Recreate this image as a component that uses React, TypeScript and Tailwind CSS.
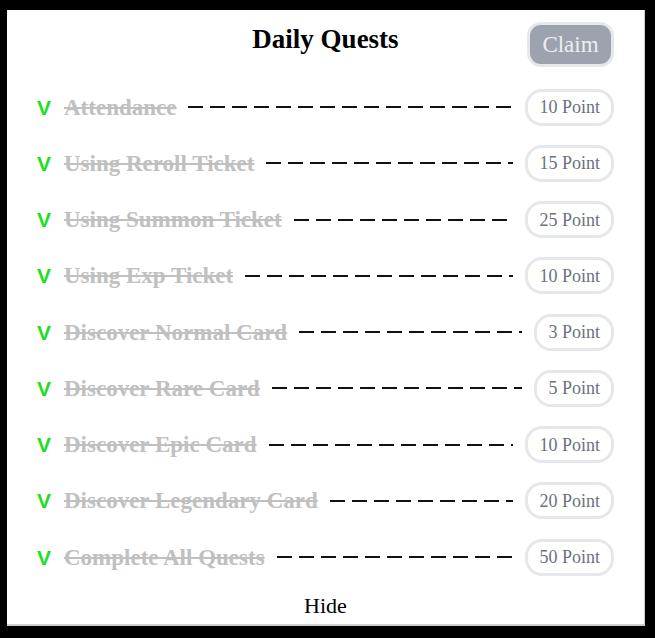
const quests = [
  { name: "Attendance", points: 10 },
  { name: "Using Reroll Ticket", points: 15 },
  { name: "Using Summon Ticket", points: 25 },
  { name: "Using Exp Ticket", points: 10 },
  { name: "Discover Normal Card", points: 3 },
  { name: "Discover Rare Card", points: 5 },
  { name: "Discover Epic Card", points: 10 },
  { name: "Discover Legendary Card", points: 20 },
  { name: "Complete All Quests", points: 50 },
];

function QuestRow({ name, points }: { name: string; points: number }) {
  return (
    <div className="flex h-[56.25px] items-center">
      <span className="w-[27px] font-['Liberation_Sans',sans-serif] text-[21px] font-bold leading-none text-[#1ee01e]">
        V
      </span>
      <span className="font-['Liberation_Serif',serif] text-[23px] font-bold leading-none text-[#c0c0c0] line-through decoration-[#c0c0c0]">
        {name}
      </span>
      <div className="mx-[12px] h-[2px] flex-1 bg-[linear-gradient(to_right,#111_15px,transparent_15px)] bg-[length:22px_2px] bg-repeat-x" />
      <div className="flex h-[37px] items-center rounded-[17px] border-[3px] border-[#e5e7eb] px-[11px] font-['Liberation_Serif',serif] text-[18px] leading-none text-[#6b7280]">
        {points} Point
      </div>
    </div>
  );
}

export default function App() {
  return (
    <div className="h-[638px] w-[655px] overflow-hidden bg-black pl-[7px] pt-[10px]">
      <div className="flex h-[616px] w-[638px] flex-col border-b-2 border-r border-[#cfcfcf] bg-white px-[30px]">
        <div className="mt-[12px] grid h-[45px] grid-cols-[1fr_auto_1fr]">
          <div />
          <h1 className="pt-[2px] font-['Liberation_Serif',serif] text-[27px] font-bold leading-[30px] text-black">
            Daily Quests
          </h1>
          <div className="flex justify-end">
            <button className="h-[45px] w-[87px] rounded-[14px] border-[3px] border-[#e5e7eb] bg-[#9ca3af] font-['Liberation_Serif',serif] text-[23px] leading-none text-[#eceef2]">
              Claim
            </button>
          </div>
        </div>
        <div className="mt-[12px] flex flex-col">
          {quests.map((q) => (
            <QuestRow key={q.name} name={q.name} points={q.points} />
          ))}
        </div>
        <button className="mx-auto mt-[9px] font-['Liberation_Serif',serif] text-[22px] leading-[24px] text-black">
          Hide
        </button>
      </div>
    </div>
  );
}
